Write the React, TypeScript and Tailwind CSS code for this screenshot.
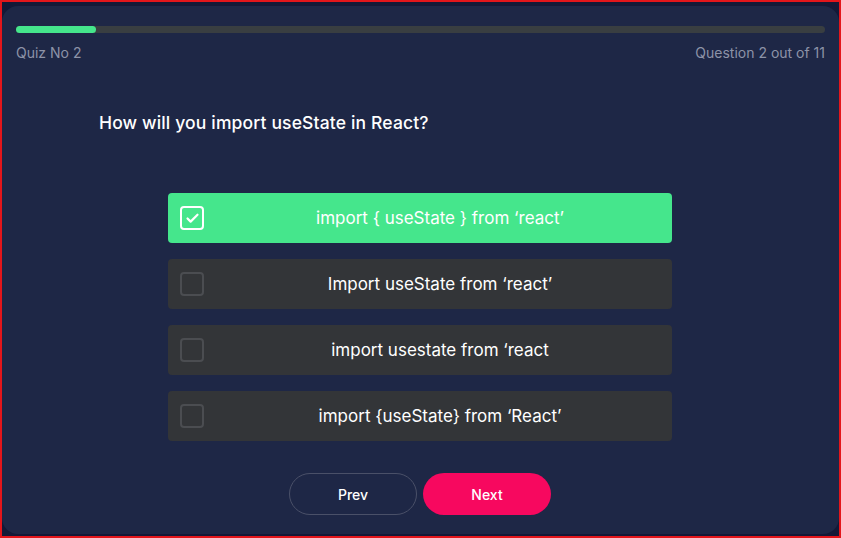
import { Check } from "lucide-react";

interface Option {
  text: string;
  checked?: boolean;
}

const options: Option[] = [
  { text: "import { useState } from \u2018react\u2019", checked: true },
  { text: "Import useState from \u2018react\u2019" },
  { text: "import usestate from \u2018react" },
  { text: "import {useState} from \u2018React\u2019" },
];

function OptionRow({ text, checked = false }: Option) {
  return (
    <div
      className={`${checked ? "bg-[#45e68c]" : "bg-[#333538]"} relative flex h-[50px] w-[504px] items-center justify-center rounded-[4px] pl-[40px]`}
    >
      <div
        className={`${checked ? "border-white" : "border-[#4b4d51]"} absolute left-[12px] top-[13px] flex h-[24px] w-[24px] items-center justify-center rounded-[4px] border-2`}
      >
        {checked ? <Check className="h-[15px] w-[15px] text-white" strokeWidth={3.5} /> : null}
      </div>
      <p className="text-[17px] text-white">{text}</p>
    </div>
  );
}

export default function App() {
  return (
    <div className="h-[538px] w-[841px] border-2 border-[#e3161b] bg-[#141937] pt-[4px] font-['Inter','Liberation_Sans',sans-serif]">
      <div className="h-[528px] w-[837px] rounded-[16px] bg-[#1e2746] pl-[13px] pr-[14px] pt-[20px]">
        <div className="ml-[1px] h-[7px] rounded-full bg-[#393e41]">
          <div className="h-[7px] w-[80px] rounded-full bg-[#45e68c]" />
        </div>
        <div className="ml-[1px] mt-[9px] flex items-center justify-between text-[14px] text-[#8d93a8]">
          <p>Quiz No 2</p>
          <p>Question 2 out of 11</p>
        </div>

        <h1 className="mt-[47px] pl-[84px] text-[17.5px] font-medium tracking-[0.15px] text-white">
          How will you import useState in React?
        </h1>

        <div className="mt-[57px] flex flex-col items-center gap-[16px]">
          {options.map((option, index) => (
            <OptionRow key={index} text={option.text} checked={option.checked} />
          ))}
        </div>

        <div className="mt-[32px] flex justify-center gap-[6px]">
          <button className="h-[42px] w-[128px] rounded-full border border-[#4a5068] text-[14px] font-medium text-white">
            Prev
          </button>
          <button className="h-[42px] w-[128px] rounded-full bg-[#f7085f] text-[14px] font-medium text-white">
            Next
          </button>
        </div>
      </div>
    </div>
  );
}
